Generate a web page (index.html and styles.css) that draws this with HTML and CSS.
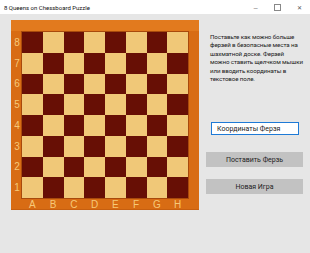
FILE: index.html
```html
<!DOCTYPE html>
<html>
<head>
  <meta charset="UTF-8">
  <meta name="viewport" content="width=device-width, initial-scale=1.0">
  <link rel="stylesheet" href="styles.css">
</head>
<body>
  <div class="titlebar">
    <div class="title">8 Queens on Chessboard Puzzle</div>
    <div class="controls">
      <span class="ctl">&#8212;</span>
      <span class="ctl max"></span>
      <span class="ctl">&#10005;</span>
    </div>
  </div>

  <div class="window">
    <div class="frame">
      <div class="ranks">
        <span>8</span><span>7</span><span>6</span><span>5</span>
        <span>4</span><span>3</span><span>2</span><span>1</span>
      </div>
      <div class="board" id="board"></div>
      <div class="files">
        <span>A</span><span>B</span><span>C</span><span>D</span>
        <span>E</span><span>F</span><span>G</span><span>H</span>
      </div>
    </div>

    <div class="side">
      <p class="info">Поставьте как можно больше<br>ферзей в безопасные места на<br>шахматной доске. Ферзей<br>можно ставить щелчком мышки<br>или вводить координаты в<br>текстовое поле.</p>
      <input type="text" class="coord-input" value="Координаты Ферзя">
      <button class="btn place">Поставить Ферзь</button>
      <button class="btn">Новая Игра</button>
    </div>
  </div>

  <script>
    const board = document.getElementById('board');
    for (let r = 0; r < 8; r++) {
      for (let c = 0; c < 8; c++) {
        const sq = document.createElement('div');
        sq.className = (r + c) % 2 === 0 ? 'square dark' : 'square light';
        board.appendChild(sq);
      }
    }
  </script>
</body>
</html>
```

FILE: styles.css
```css
body {
  margin: 0;
  width: 310px;
  height: 253px;
  background: #e6e6e6;
  font-family: Roboto, "Noto Sans", sans-serif;
  color: #222;
  overflow: hidden;
}
.titlebar {
  height: 14px;
  background: #fff;
  display: flex;
  align-items: center;
  justify-content: space-between;
  padding-left: 4px;
}
.title {
  font-size: 6px;
  color: #111;
}
.controls {
  display: flex;
  align-items: center;
  height: 14px;
}
.ctl {
  width: 21px;
  text-align: center;
  font-size: 6px;
  color: #555;
}
.ctl.max {
  width: 5px;
  height: 5px;
  border: 1px solid #888;
  margin: 0 8px;
}
.window {
  display: flex;
  padding: 6px 0 0 11px;
}
.frame {
  display: grid;
  grid-template-columns: 11px 166px 11px;
  grid-template-rows: 12px 166px 12px;
  background: #d86c14;
  box-shadow: inset 0 11px 0 #e27a1e, inset 0 -1px 0 #c65f10;
}
.ranks {
  grid-column: 1;
  grid-row: 2;
  display: flex;
  flex-direction: column;
}
.ranks span, .files span {
  flex: 1;
  display: flex;
  align-items: center;
  justify-content: center;
  color: #f6c878;
  font-family: "Liberation Sans", Arial, sans-serif;
  font-size: 10px;
}
.ranks span {
  padding-left: 1px;
}
.files {
  grid-column: 2;
  grid-row: 3;
  display: flex;
}
.board {
  grid-column: 2;
  grid-row: 2;
  display: grid;
  grid-template-columns: repeat(8, 1fr);
  grid-template-rows: repeat(8, 1fr);
  box-shadow: 0 0 0 1px #a84a0c;
}
.square.dark {
  background: #670f05;
}
.square.light {
  background: #f0c878;
}
.side {
  margin-left: 11px;
  width: 95px;
  display: flex;
  flex-direction: column;
}
.info {
  margin: 13px 0 0 0;
  font-size: 6.2px;
  letter-spacing: -0.1px;
  line-height: 8.4px;
  white-space: nowrap;
  color: #1a1a1a;
}
.coord-input {
  margin: 39px 0 0 1px;
  width: 88px;
  height: 13px;
  box-sizing: border-box;
  border: 1px solid #1e7ad6;
  padding: 0 0 0 5px;
  font-family: Roboto, sans-serif;
  font-size: 7px;
  color: #222;
  background: #fff;
  outline: none;
}
.btn {
  margin: 17px 0 0 -4px;
  width: 97px;
  height: 15px;
  border: none;
  background: #c2c2c2;
  font-family: Roboto, sans-serif;
  font-size: 7px;
  color: #222;
  padding: 0;
}
.btn.place {
  margin-top: 17px;
}
.btn + .btn {
  margin-top: 12px;
}
```
